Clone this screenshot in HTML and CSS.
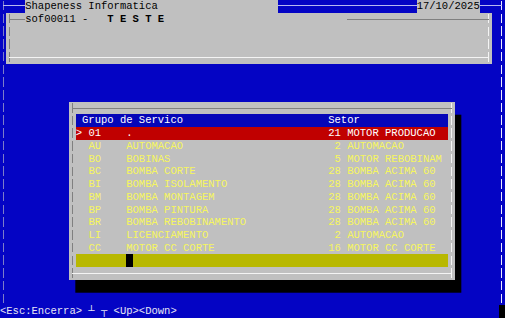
FILE: index.html
```html
<!DOCTYPE html>
<html lang="pt">
<head>
  <meta charset="UTF-8" />
  <title>Shapeness Informatica</title>
  <link rel="stylesheet" href="styles.css">
</head>
<body>

  <div class="screen">
    <!-- outer frame of the console -->
    <div class="frame"></div>

    <div class="app-title">Shapeness Informatica</div>
    <div class="app-date">17/10/2025</div>

    <div class="panel">
      <div class="panel-title">sof00011 -   <b>T E S T E</b></div>
    </div>

    <!-- lookup dialog -->
    <div class="dialog">
      <div class="list-head"><span>Grupo de Servico</span><span>Setor</span></div>

      <div class="row selected"><span>&gt;</span><span>01</span><span>.</span><span class="num">21</span><span class="sector">MOTOR PRODUCAO</span></div>
      <div class="row"><span></span><span>AU</span><span>AUTOMACAO</span><span class="num">2</span><span class="sector">AUTOMACAO</span></div>
      <div class="row"><span></span><span>BO</span><span>BOBINAS</span><span class="num">5</span><span class="sector">MOTOR REBOBINAM</span></div>
      <div class="row"><span></span><span>BC</span><span>BOMBA CORTE</span><span class="num">28</span><span class="sector">BOMBA ACIMA 60</span></div>
      <div class="row"><span></span><span>BI</span><span>BOMBA ISOLAMENTO</span><span class="num">28</span><span class="sector">BOMBA ACIMA 60</span></div>
      <div class="row"><span></span><span>BM</span><span>BOMBA MONTAGEM</span><span class="num">28</span><span class="sector">BOMBA ACIMA 60</span></div>
      <div class="row"><span></span><span>BP</span><span>BOMBA PINTURA</span><span class="num">28</span><span class="sector">BOMBA ACIMA 60</span></div>
      <div class="row"><span></span><span>BR</span><span>BOMBA REBOBINAMENTO</span><span class="num">28</span><span class="sector">BOMBA ACIMA 60</span></div>
      <div class="row"><span></span><span>LI</span><span>LICENCIAMENTO</span><span class="num">2</span><span class="sector">AUTOMACAO</span></div>
      <div class="row"><span></span><span>CC</span><span>MOTOR CC CORTE</span><span class="num">16</span><span class="sector">MOTOR CC CORTE</span></div>

      <div class="list-input"><span class="caret"></span></div>
    </div>

    <div class="status">&lt;Esc:Encerra&gt; ┴ ┬ &lt;Up&gt;&lt;Down&gt;</div>
    <div class="cursor-cell"></div>
  </div>

</body>
</html>
```

FILE: styles.css
```css
* { margin: 0; padding: 0; box-sizing: border-box; }

body {
  background: #0404c4;
  color: #000;
  font-family: 'Liberation Mono', 'DejaVu Sans Mono', monospace;
  font-size: 10.52px;
  line-height: 12.72px;
}

/* 80 x 25 text console */
.screen {
  --cw: 6.3125px;
  --rh: 12.72px;
  --gray: #c0c0c0;
  --dark: #808080;
  --light: #f4f4f4;
  width: 505px;
  height: 318px;
  display: grid;
  grid-template-columns: repeat(80, var(--cw));
  grid-template-rows: repeat(25, var(--rh));
  background: #0404c4;
  white-space: nowrap;
  overflow: hidden;
}

.frame {
  grid-column: 1 / -1;
  grid-row: 1 / 25;
  background:
    linear-gradient(#b8b8f0, #b8b8f0) 3px 5px / calc(100% - 6px) 1px no-repeat,
    repeating-linear-gradient(to bottom, transparent 0 1px, #7c7cc8 1px 10.5px, transparent 10.5px 12.72px) 3px 0 / 1px 100% no-repeat,
    repeating-linear-gradient(to bottom, transparent 0 1px, #ececff 1px 10.5px, transparent 10.5px 12.72px) right 3px top 0 / 1px 100% no-repeat;
}

.app-title {
  grid-column: 5 / 45;
  grid-row: 1;
  background: var(--gray);
}

.app-date {
  grid-column: 67 / 77;
  grid-row: 1;
  background: var(--gray);
}

/* top panel */
.panel {
  grid-column: 2 / 79;
  grid-row: 2 / 6;
  position: relative;
  background:
    repeating-linear-gradient(to bottom, transparent 0 1px, var(--dark) 1px 10.5px, transparent 10.5px 12.72px) 3px 0 / 1px 100% no-repeat,
    repeating-linear-gradient(to bottom, transparent 0 1px, var(--light) 1px 10.5px, transparent 10.5px 12.72px) right 3px top 0 / 1px 100% no-repeat,
    var(--gray);
}

.panel::before {
  content: "";
  position: absolute;
  top: 6px; bottom: 6px;
  left: 3px; right: 3px;
  border-top: 1px solid var(--dark);
  border-bottom: 1px solid var(--light);
}

.panel-title {
  position: relative;
  margin-left: calc(var(--cw) * 3);
  width: calc(var(--cw) * 51);
  height: var(--rh);
  background: var(--gray);
  white-space: pre;
}

/* dialog */
.dialog {
  grid-column: 12 / 73;
  grid-row: 9 / 23;
  position: relative;
  padding: var(--rh) var(--cw);
  box-shadow: var(--cw) var(--rh) 0 #000;
  background:
    repeating-linear-gradient(to bottom, transparent 0 1px, var(--dark) 1px 10.5px, transparent 10.5px 12.72px) 3px 0 / 1px 100% no-repeat,
    repeating-linear-gradient(to bottom, transparent 0 1px, var(--light) 1px 10.5px, transparent 10.5px 12.72px) right 3px top 0 / 1px 100% no-repeat,
    var(--gray);
}

.dialog::before {
  content: "";
  position: absolute;
  top: 6px; bottom: 6px;
  left: 3px; right: 3px;
  border-top: 1px solid var(--dark);
  border-bottom: 1px solid var(--light);
}

.list-head {
  display: grid;
  grid-template-columns: calc(var(--cw) * 39) 1fr;
  padding-left: var(--cw);
  height: var(--rh);
  background: #0606b8;
  color: #fff;
}

.row {
  display: grid;
  grid-template-columns: calc(var(--cw) * 2) calc(var(--cw) * 6) calc(var(--cw) * 32) calc(var(--cw) * 2) 1fr;
  height: var(--rh);
  color: #f6f65e;
}

.row .num { text-align: right; }
.row .sector { padding-left: var(--cw); }

.row.selected {
  background: #c00000;
  color: #fff;
}

.list-input {
  height: var(--rh);
  padding-left: calc(var(--cw) * 8);
  background: #b8b800;
}

.caret {
  display: block;
  width: var(--cw);
  height: 100%;
  background: #000;
}

.status {
  grid-column: 1 / -1;
  grid-row: 25;
  color: #e4e4f4;
  white-space: pre;
}

.cursor-cell {
  grid-column: 80;
  grid-row: 25;
  background: #000;
}
```
